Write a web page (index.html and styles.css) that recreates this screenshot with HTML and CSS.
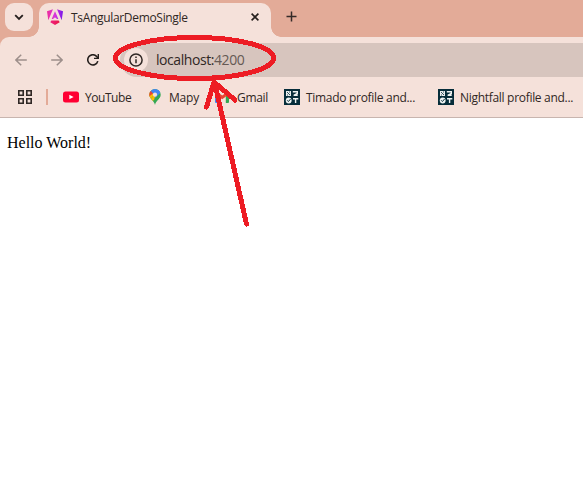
FILE: index.html
```html
<!DOCTYPE html>
<html lang="en">
<head>
<meta charset="utf-8">
<title>TsAngularDemoSingle</title>
<link rel="stylesheet" href="styles.css">
</head>
<body>
<div class="browser">
  <header class="tabstrip">
    <div class="search-tabs"><svg width="10" height="7" viewBox="0 0 10 7"><path d="M1.2 1.2 5 5l3.8-3.8" fill="none" stroke="#251f1d" stroke-width="1.8"/></svg></div>
    <div class="tab">
      <svg class="angular" width="16" height="16" viewBox="0 0 16 16">
        <defs><linearGradient id="ng" gradientUnits="userSpaceOnUse" x1="0" y1="0" x2="16" y2="0"><stop stop-color="#ee2d9b"/><stop offset=".5" stop-color="#d735dd"/><stop offset="1" stop-color="#7716e9"/></linearGradient><linearGradient id="nr"><stop stop-color="#f02083"/><stop offset="1" stop-color="#e81845"/></linearGradient></defs>
        <path d="M0 2.300 6 .3 1.300 11.300ZM16 2.300 10 .3l4.700 11ZM8 2.300 11.300 10H9.700L9.100 8.700H6.900L6.300 10H4.700Z" fill="url(#ng)"/>
        <path d="M3.300 13.300 4.400 11.600h7.200l1.100 1.700L8 16Z" fill="url(#nr)"/>
      </svg>
      <span class="title">TsAngularDemoSingle</span>
      <svg class="close" width="8" height="8" viewBox="0 0 8 8"><path d="m.6.6 6.8 6.8m0-6.8L.6 7.4" stroke="#251f1d" stroke-width="1.6"/></svg>
    </div>
    <svg class="plus" width="11" height="11" viewBox="0 0 11 11"><path d="M5.5.5v10M.5 5.5h10" stroke="#352b28" stroke-width="1.5"/></svg>
  </header>
  <nav class="toolbar">
    <svg class="nav-icon" width="12" height="12" viewBox="0 0 12 12"><path d="M11.8 6H1m5.2-5.3L.9 6l5.3 5.3" fill="none" stroke="#9d8f8b" stroke-width="1.5"/></svg>
    <svg class="nav-icon" width="12" height="12" viewBox="0 0 12 12"><path d="M.2 6H11M5.8.7 11.1 6l-5.3 5.3" fill="none" stroke="#9d8f8b" stroke-width="1.5"/></svg>
    <svg class="nav-icon" width="12" height="12" viewBox="0 0 12 12"><path d="M10.8 7.1A5.1 5.1 0 1 1 9.9 2.7L11 4" fill="none" stroke="#251f1d" stroke-width="1.6"/><path d="M12 0v5H7V3.7h3.6V0Z" fill="#251f1d"/></svg>
    <div class="address">
      <span class="info"><svg width="14" height="14" viewBox="0 0 14 14"><circle cx="7" cy="7" r="6.1" fill="none" stroke="#302825" stroke-width="1.5"/><path d="M7 6.2v4M7 3.6v1.5" stroke="#302825" stroke-width="1.5"/></svg></span>
      <span class="url">localhost:<span class="port">4200</span></span>
    </div>
  </nav>
  <nav class="bookmarks">
    <svg class="apps" width="14" height="14" viewBox="0 0 14 14"><path d="M.8.8h4.4v4.4H.8ZM8.8.8h4.4v4.4H8.8ZM.8 8.8h4.4v4.4H.8ZM8.8 8.8h4.4v4.4H8.8Z" fill="none" stroke="#302825" stroke-width="1.6"/></svg>
    <i class="divider"></i>
    <a class="bookmark youtube"><svg width="16" height="16" viewBox="0 0 16 16"><rect y="2.500" width="16" height="11" rx="2.500" fill="#ff0033"/><path d="m6.300 5.800 4.300 2.200-4.300 2.200Z" fill="#fff"/></svg><span>YouTube</span></a>
    <a class="bookmark mapy"><svg width="16" height="16" viewBox="0 0 16 16"><defs><clipPath id="pin"><path d="M8 0a5.700 5.700 0 0 1 5.700 5.700C13.700 10 9 11 8 16 7 11 2.300 10 2.300 5.700A5.700 5.700 0 0 1 8 0Z"/></clipPath></defs><g clip-path="url(#pin)"><path d="M0 0h16v16H0Z" fill="#34a853"/><path d="m0 14 8-9-5-2-3 3Z" fill="#fbbc04"/><path d="m2 12 7-8-2 7-3 2Z" fill="#fbbc04"/><path d="m8 5.700 4-6 1.500 4L8 9Z" fill="#4285f4"/><path d="M3 2 8 6l5-4-2-3H5Z" fill="#4285f4"/><path d="M0 9 6 4.500 3.500 1.500 0 5Z" fill="#ea4335"/></g><circle cx="8" cy="5.700" r="2.100" fill="#f5e1da"/></svg><span>Mapy</span></a>
    <a class="bookmark gmail"><svg width="16" height="16" viewBox="0 0 16 16"><path d="M0 4 3.400 6v8H1q-1 0-1-1Z" fill="#4285f4"/><path d="M10.800 6.800 14 4.500V13q0 1-1 1h-2.200Z" fill="#34a853"/><path d="M3.400 3.700 7.200 6.500 11 3.700v3.900l-3.800 2.600L3.400 7.600Z" fill="#ea4335"/><path d="M0 4.500q0-2.500 3.400-.8v3.900L0 5.500Z" fill="#c5221f"/><path d="M14 4.500q0-2.500-3.200-.8v3.900L14 5.500Z" fill="#fbbc04"/></svg><span>Gmail</span></a>
    <a class="bookmark timado"><svg width="16" height="16" viewBox="0 0 16 16"><path d="M0 0h16v16H0Z" fill="#062d3a"/><path d="M2 2h5v5H2Z" fill="#e9eeee"/><path d="m3 3 3 3M5.500 2.500v1M3 6h1" stroke="#062d3a" stroke-width=".8" fill="none"/><path d="M9.500 3.500V2.700h3.800v1.800L9.700 6.300h4M9 9.700h5.300M11.600 9.700V14" fill="none" stroke="#eef3f2" stroke-width="1.400"/><circle cx="4.700" cy="11.500" r="2.900" fill="#eef3f2"/><path d="m3.200 11.300 1.200 1.200 2.200-2.500" fill="none" stroke="#062d3a"/></svg><span>Timado profile and...</span></a>
    <a class="bookmark nightfall"><svg width="16" height="16" viewBox="0 0 16 16"><path d="M0 0h16v16H0Z" fill="#062d3a"/><path d="M2 2h5v5H2Z" fill="#e9eeee"/><path d="m3 3 3 3M5.500 2.500v1M3 6h1" stroke="#062d3a" stroke-width=".8" fill="none"/><path d="M9.500 3.500V2.700h3.800v1.800L9.700 6.300h4M9 9.700h5.300M11.600 9.700V14" fill="none" stroke="#eef3f2" stroke-width="1.400"/><circle cx="4.700" cy="11.500" r="2.900" fill="#eef3f2"/><path d="m3.200 11.300 1.200 1.200 2.200-2.500" fill="none" stroke="#062d3a"/></svg><span>Nightfall profile and...</span></a>
  </nav>
  <main>Hello World!</main>
  <svg class="annotation" width="583" height="486" viewBox="0 0 583 486" fill="none" stroke="#ed1c24" stroke-width="5" stroke-linecap="round" stroke-linejoin="round" shape-rendering="crispEdges"><ellipse cx="194.500" cy="58" rx="79" ry="20.500"/><path d="M246.500 224 214.500 82M206.500 107l7.500-25 21 18"/></svg>
</div>
</body>
</html>
```
FILE: styles.css
```css
* { box-sizing: border-box; }
body { margin: 0; background: #fff; overflow: hidden; }
svg { display: block; flex-shrink: 0; }
.browser { position: relative; width: 583px; height: 486px; overflow: hidden; font-family: "Open Sans", "Noto Sans", sans-serif; color: #302724; background: #e3ab98; }
.tabstrip { display: flex; height: 37px; padding: 3px 0 0 5px; }
.search-tabs { display: flex; align-items: center; justify-content: center; width: 28px; height: 28px; border-radius: 9px; background: #f5e1da; }
.tab { position: relative; display: flex; width: 232px; height: 34px; margin-left: 6px; padding: 6px 12px 0 8px; border-radius: 10px 10px 0 0; background: #f5e1da; }
.tab::before, .tab::after { content: ""; position: absolute; bottom: 0; width: 10px; height: 10px; }
.tab::before { left: -10px; background: radial-gradient(circle at 0 0, transparent 9.5px, #f5e1da 10px); }
.tab::after { right: -10px; background: radial-gradient(circle at 100% 0, transparent 9.5px, #f5e1da 10px); }
.title { width: 117px; margin-left: 8px; font-size: 12px; line-height: 17px; letter-spacing: -.32px; white-space: nowrap; }
.close { margin: 4px 0 0 auto; }
.plus { margin: 8px 0 0 15px; }
.toolbar { display: flex; align-items: center; height: 46px; padding-left: 15px; background: #f5e1da; border-top-left-radius: 9px; }
.nav-icon { margin-right: 24px; }
.address { display: flex; align-items: center; flex: 1; height: 34px; margin-left: -3px; padding-left: 4px; background: #d7c5be; border-radius: 17px 0 0 17px; }
.info { display: flex; align-items: center; justify-content: center; width: 24px; height: 24px; background: #f5e1da; border-radius: 50%; }
.url { margin-left: 8px; font-size: 14px; line-height: 20px; letter-spacing: -.43px; }
.port { color: #655954; }
.bookmarks { display: flex; align-items: center; height: 35px; padding: 0 0 6px 18px; background: #f5e1da; border-bottom: 1px solid #c8b5af; }
.divider { width: 2px; height: 16px; margin: 0 15px 0 14px; background: #e3ab98; }
.bookmark { display: flex; align-items: center; gap: 6px; font-size: 12px; line-height: 17px; letter-spacing: -.3px; white-space: nowrap; flex-shrink: 0; }
.youtube { width: 84px; letter-spacing: -.45px; }
.mapy { width: 68px; letter-spacing: -.2px; }
.gmail { width: 69px; }
.timado { width: 154px; }
main { height: 368px; padding: 15px 0 0 7px; background: #fff; color: #000; font: 16px/20px "Liberation Serif", serif; }
.annotation { position: absolute; inset: 0; pointer-events: none; }
```
